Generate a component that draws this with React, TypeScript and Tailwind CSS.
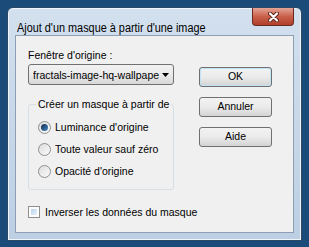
import React from 'react';

const btn =
    'flex items-center justify-center w-[73px] h-[20px] rounded-[3px] border border-[#707070] bg-gradient-to-b from-[#f2f2f2] via-[#ebebeb] to-[#d4d4d4] text-[10.5px] text-black';

const Radio = ({ checked, label }: { checked?: boolean; label: string }) => (
    <div className="flex items-center h-[22px]">
        <div className="shrink-0 w-[13px] h-[13px] rounded-full border border-[#8e8f8f] bg-gradient-to-br from-[#dcdcdc] to-[#fbfbfb] flex items-center justify-center">
            {checked && <div className="w-[7px] h-[7px] rounded-full bg-gradient-to-br from-[#0d2a4a] to-[#4a8fc8]"></div>}
        </div>
        <span className="ml-[4px] whitespace-nowrap text-[10.5px] leading-[14px] text-black">{label}</span>
    </div>
);

const App = () => {
    return (
        <div className="w-[309px] h-[247px] bg-[#1b4b79] pt-[7px] pl-[7px] [font-family:'Liberation_Sans',Arial,sans-serif]">
            {/* window frame */}
            <div className="w-[295px] h-[234px] rounded-t-[6px] border border-[#2c4a66] bg-gradient-to-b from-[#d3e0ee] to-[#bccfe3] shadow-[inset_0_0_0_1px_#eef4fa] flex flex-col">
                {/* title bar */}
                <div className="flex h-[27px]">
                    <div className="flex-1 pl-[9px] pt-[7px] whitespace-nowrap">
                        <span className="inline-block origin-left scale-x-[0.87] text-[12.5px] leading-[16px] text-black">
                            Ajout d'un masque à partir d'une image
                        </span>
                    </div>
                    <div className="mr-[7px] w-[42px] h-[18px] rounded-b-[4px] border border-[#6b2a1e] border-t-0 bg-gradient-to-b from-[#e4a497] via-[#c9604a] to-[#b0402a] flex items-center justify-center">
                        <svg width="11" height="10" viewBox="0 0 11 10">
                            <path d="M2 1.5 L9 8.5 M9 1.5 L2 8.5" stroke="#5b2014" strokeWidth="4" strokeLinecap="round" />
                            <path d="M2 1.5 L9 8.5 M9 1.5 L2 8.5" stroke="#ffffff" strokeWidth="2.2" strokeLinecap="round" />
                        </svg>
                    </div>
                </div>

                {/* client area */}
                <div className="mx-[7px] mb-[7px] flex-1 border border-[#8d9fb3] bg-[#f0f0f0] pl-[12px] flex">
                    <div className="w-[146px] flex flex-col">
                        <div className="mt-[12px] h-[14px] whitespace-nowrap text-[10.5px] leading-[14px] text-black">Fenêtre d'origine :</div>
                        <div className="mt-[2px] h-[21px] rounded-[3px] border border-[#707070] bg-gradient-to-b from-[#f2f2f2] via-[#ebebeb] to-[#d8d8d8] flex items-center pl-[4px] pr-[4px]">
                            <span className="flex-1 overflow-hidden whitespace-nowrap text-[10.5px] leading-[14px] text-black">
                                fractals-image-hq-wallpape
                            </span>
                            <svg width="7" height="4" viewBox="0 0 7 4" className="ml-[2px] shrink-0">
                                <path d="M0 0 H7 L3.5 4 Z" fill="#000" />
                            </svg>
                        </div>

                        <fieldset className="mt-[12px] h-[93px] rounded-[3px] border border-[#d5dfe5] pl-[9px]">
                            <legend className="ml-[-2px] px-[2px] whitespace-nowrap text-[10.5px] leading-[14px] text-black">Créer un masque à partir de</legend>
                            <div className="mt-[5px] flex flex-col">
                                <Radio checked label="Luminance d'origine" />
                                <Radio label="Toute valeur sauf zéro" />
                                <Radio label="Opacité d'origine" />
                            </div>
                        </fieldset>

                        <div className="mt-[15px] flex items-center h-[14px]">
                            <div className="shrink-0 w-[12px] h-[12px] border border-[#8e8f8f] bg-white p-[2px]">
                                <div className="w-full h-full bg-gradient-to-br from-[#b9d3eb] to-[#e8f2fb]"></div>
                            </div>
                            <span className="ml-[5px] whitespace-nowrap text-[10.5px] leading-[14px] text-black">Inverser les données du masque</span>
                        </div>
                    </div>

                    <div className="ml-[25px] mt-[31px] flex flex-col gap-[10px]">
                        <div className={`${btn} border-[#3c7fb1] shadow-[inset_0_0_0_1px_#bfe3f7]`}>OK</div>
                        <div className={btn}>Annuler</div>
                        <div className={btn}>Aide</div>
                    </div>
                </div>
            </div>
        </div>
    );
};

export default App;
